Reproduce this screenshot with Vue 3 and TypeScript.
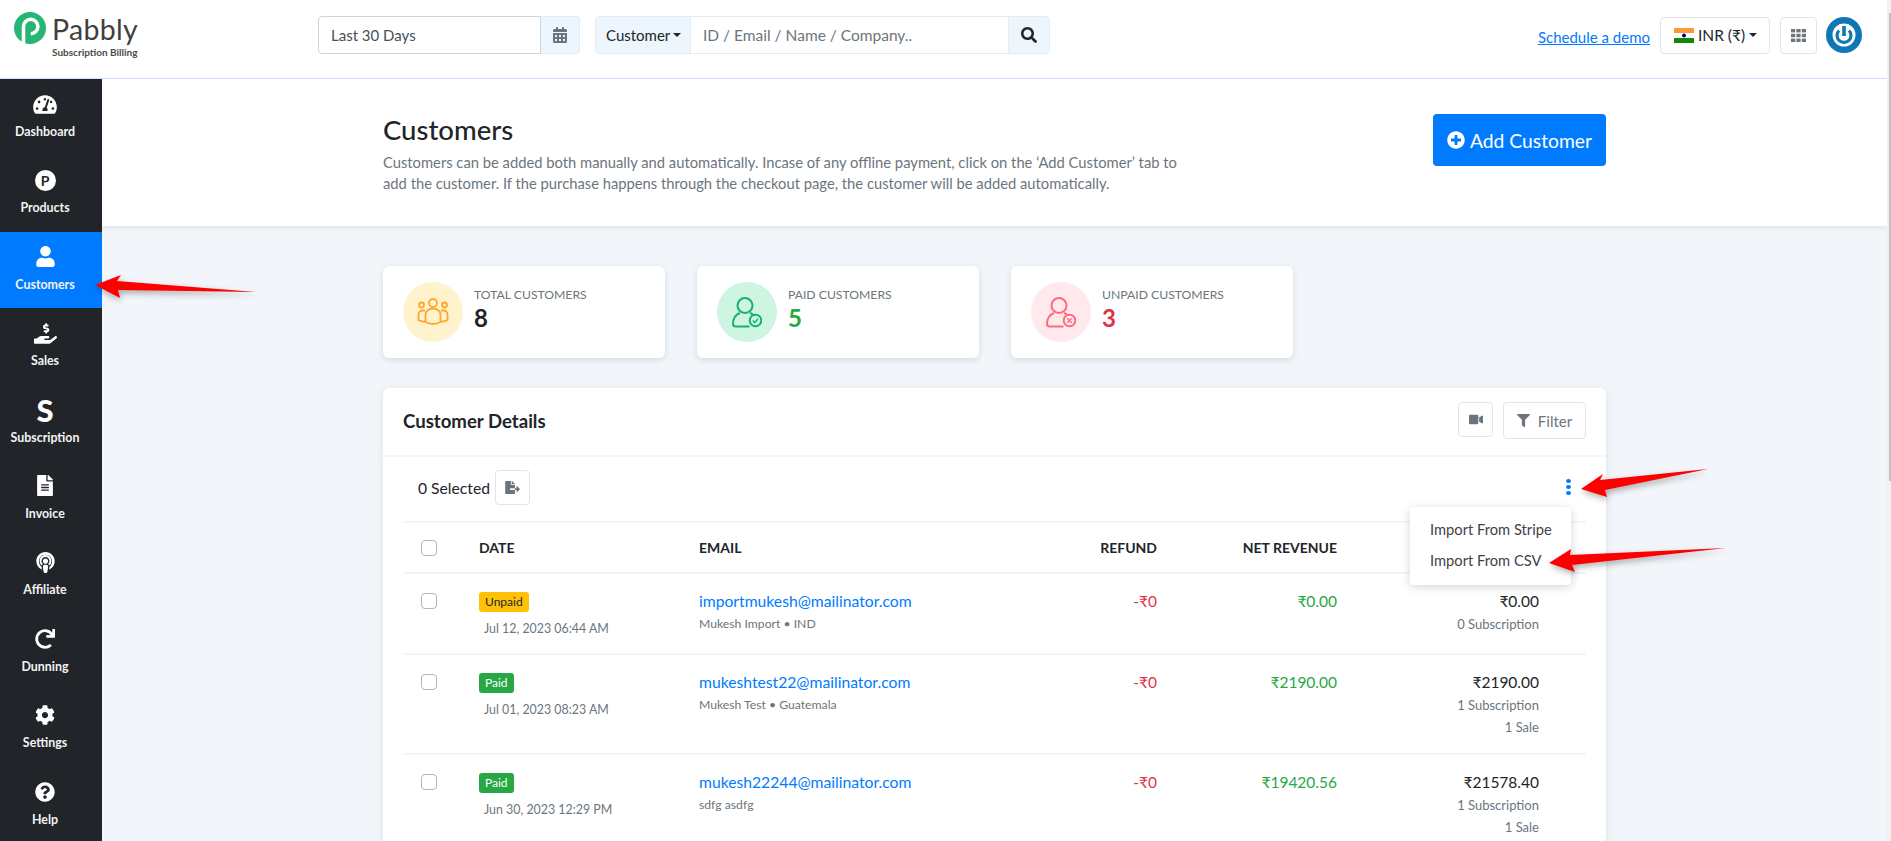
<template>
  <div class="app">
    <header class="topbar">
      <div class="logo">
        <svg class="logo-mark" viewBox="0 0 32 32" width="32" height="32">
          <circle cx="16" cy="16" r="16" fill="#27b574" />
          <path d="M9.5 32V14.5a7.2 7.2 0 1 1 7.2 7.2" fill="none" stroke="#fff" stroke-width="3.6" />
          <circle cx="16.7" cy="14.5" r="3.4" fill="#27b574" />
        </svg>
        <div class="logo-text">
          <div class="logo-name">Pabbly</div>
          <div class="logo-sub">Subscription Billing</div>
        </div>
      </div>

      <div class="date-group">
        <div class="date-input">Last 30 Days</div>
        <div class="addon">
          <svg viewBox="0 0 448 512" width="14" height="16"><path fill="#6c757d" :d="icons.calendar" /></svg>
        </div>
      </div>

      <div class="search-group">
        <div class="search-type">Customer<span class="caret"></span></div>
        <div class="search-input">ID / Email / Name / Company..</div>
        <div class="search-btn">
          <svg viewBox="0 0 512 512" width="16" height="16"><path fill="#212529" :d="icons.search" /></svg>
        </div>
      </div>

      <a class="demo-link">Schedule a demo</a>
      <div class="top-btn inr">
        <svg class="flag" viewBox="0 0 20 15" width="20" height="15">
          <rect width="20" height="5" fill="#ff9933" />
          <rect y="5" width="20" height="5" fill="#fff" />
          <rect y="10" width="20" height="5" fill="#138808" />
          <circle cx="10" cy="7.5" r="2" fill="#000080" />
        </svg>
        <span>INR (₹)</span><span class="caret"></span>
      </div>
      <div class="top-btn grid-btn">
        <svg viewBox="0 0 15 13" width="15" height="13">
          <g fill="#6c757d">
            <rect v-for="c in gridCells" :key="c.x + '-' + c.y" :x="c.x" :y="c.y" width="4.2" height="3.4" />
          </g>
        </svg>
      </div>
      <svg class="avatar" viewBox="0 0 36 36" width="36" height="36">
        <circle cx="18" cy="18" r="18" fill="#0f78b4" />
        <circle cx="18" cy="18" r="11.5" fill="#fff" />
        <path d="M13 13.5a7 7 0 1 0 10 0" fill="none" stroke="#0f78b4" stroke-width="3.2" />
        <rect x="16.2" y="9" width="3.6" height="10" fill="#0f78b4" />
      </svg>
    </header>

    <div class="layout">
      <nav class="sidebar">
        <div v-for="item in nav" :key="item.label" class="nav-item" :class="{ active: item.label === 'Customers' }">
          <div class="nav-icon">
            <span v-if="item.label === 'Products'" class="p-icon">P</span>
            <span v-else-if="item.label === 'Subscription'" class="s-icon">S</span>
            <svg v-else :viewBox="item.box" :width="item.w" :height="item.h"><path fill="#fff" :d="item.d" /></svg>
          </div>
          <div class="nav-label">{{ item.label }}</div>
        </div>
      </nav>

      <main class="main">
        <section class="page-head">
          <div>
            <h1>Customers</h1>
            <p>Customers can be added both manually and automatically. Incase of any offline payment, click on the ‘Add Customer’ tab to<br />add the customer. If the purchase happens through the checkout page, the customer will be added automatically.</p>
          </div>
          <button class="add-btn">
            <svg viewBox="0 0 512 512" width="18" height="18"><path fill="#fff" :d="icons.plus" /></svg>
            Add Customer
          </button>
        </section>

        <section class="content">
          <div class="stats">
            <div class="stat">
              <div class="stat-circle orange">
                <svg viewBox="0 0 32 28" width="32" height="28" fill="none" stroke="#ffa62b" stroke-width="1.8">
                  <circle cx="16" cy="5" r="4" />
                  <circle cx="4.5" cy="7" r="2.5" />
                  <circle cx="27.500" cy="7" r="2.5" />
                  <path d="M8.500 24V16.500a7.500 6 0 0 1 15 0V24q-7.500 4-15 0z" />
                  <path d="M8 12.500H5.500a4 4 0 0 0-4 4V22q2.500 2 7 1.500M24 12.500h2.500a4 4 0 0 1 4 4V22q-2.500 2-7 1.500" />
                </svg>
              </div>
              <div>
                <div class="stat-label">TOTAL CUSTOMERS</div>
                <div class="stat-num">8</div>
              </div>
            </div>
            <div class="stat">
              <div class="stat-circle green">
                <svg viewBox="0 0 30 31" width="30" height="31" fill="none" stroke="#17b26a" stroke-width="2">
                  <circle cx="13" cy="8.500" r="7.500" />
                  <path d="M17.500 29.500H4q-3 0-3-2.500c0-6 3-9.500 7-11M18 16q2 .8 3.500 2" />
                  <circle cx="23.500" cy="23.500" r="5.800" />
                  <path d="M20.800 23.500l2 2.200 3.200-4" stroke-width="1.500" />
                </svg>
              </div>
              <div>
                <div class="stat-label">PAID CUSTOMERS</div>
                <div class="stat-num paid">5</div>
              </div>
            </div>
            <div class="stat">
              <div class="stat-circle red">
                <svg viewBox="0 0 30 31" width="30" height="31" fill="none" stroke="#ff6b7d" stroke-width="2">
                  <circle cx="13" cy="8.500" r="7.500" />
                  <path d="M17.500 29.500H4q-3 0-3-2.500c0-6 3-9.500 7-11M18 16q2 .8 3.500 2" />
                  <circle cx="23.500" cy="23.500" r="5.800" />
                  <path d="M21.300 21.300l4.400 4.400M25.700 21.300l-4.400 4.400" stroke-width="1.500" />
                </svg>
              </div>
              <div>
                <div class="stat-label">UNPAID CUSTOMERS</div>
                <div class="stat-num unpaid">3</div>
              </div>
            </div>
          </div>

          <div class="card">
            <div class="card-head">
              <h2>Customer Details</h2>
              <div class="card-actions">
                <div class="icon-btn video">
                  <svg viewBox="0 0 576 512" width="14" height="13"><path fill="#6c757d" :d="icons.video" /></svg>
                </div>
                <div class="icon-btn filter">
                  <svg viewBox="0 0 512 512" width="13" height="13"><path fill="#6c757d" :d="icons.filter" /></svg>
                  Filter
                </div>
              </div>
            </div>

            <div class="toolbar">
              <div class="selected">
                0 Selected
                <div class="icon-btn export">
                  <svg viewBox="0 0 576 512" width="15" height="13"><path fill="#6c757d" :d="icons.fileExport" /></svg>
                </div>
              </div>
              <div class="kebab"><i></i><i></i><i></i></div>
              <div class="dropdown">
                <div>Import From Stripe</div>
                <div>Import From CSV</div>
              </div>
            </div>

            <div class="table">
              <div class="row head">
                <span class="check"></span>
                <span>DATE</span>
                <span>EMAIL</span>
                <span class="num">REFUND</span>
                <span class="num">NET REVENUE</span>
                <span></span>
              </div>
              <div v-for="row in rows" :key="row.email" class="row">
                <span class="check body-check"></span>
                <div>
                  <span class="badge" :class="row.status.toLowerCase()">{{ row.status }}</span>
                  <div class="date">{{ row.date }}</div>
                </div>
                <div>
                  <div class="email">{{ row.email }}</div>
                  <div class="sub">{{ row.name }}</div>
                </div>
                <div class="num refund">-₹0</div>
                <div class="num net">{{ row.net }}</div>
                <div class="num">
                  <div class="total">{{ row.total }}</div>
                  <div class="sub">{{ row.subs }}</div>
                  <div v-if="row.sale" class="sub sale">{{ row.sale }}</div>
                </div>
              </div>
            </div>
          </div>
        </section>
      </main>
    </div>

    <!-- annotation arrows drawn over the screenshot -->
    <svg class="arrows" width="1887" height="841" viewBox="0 0 1887 841">
      <polygon points="95,285 121,275 117,281 256,292 118,290 120,298" />
      <polygon points="1581,489 1603,474 1600,480 1708,469 1605,490 1607,497" />
      <polygon points="1549,563 1571,549 1570,555 1726,548 1572,565 1575,572" />
    </svg>

    <div class="scrollbar"><div class="thumb"></div></div>
  </div>
</template>

<script setup lang="ts">
const icons = {
  calendar:
    'M0 464c0 26.5 21.5 48 48 48h352c26.5 0 48-21.5 48-48V192H0v272zm320-196c0-6.6 5.4-12 12-12h40c6.6 0 12 5.4 12 12v40c0 6.6-5.4 12-12 12h-40c-6.6 0-12-5.4-12-12v-40zm0 128c0-6.6 5.4-12 12-12h40c6.600 0 12 5.400 12 12v40c0 6.600-5.400 12-12 12h-40c-6.600 0-12-5.400-12-12v-40zM192 268c0-6.600 5.400-12 12-12h40c6.600 0 12 5.400 12 12v40c0 6.600-5.400 12-12 12h-40c-6.600 0-12-5.400-12-12v-40zm0 128c0-6.600 5.400-12 12-12h40c6.600 0 12 5.400 12 12v40c0 6.600-5.400 12-12 12h-40c-6.600 0-12-5.400-12-12v-40zM64 268c0-6.600 5.400-12 12-12h40c6.600 0 12 5.400 12 12v40c0 6.600-5.400 12-12 12H76c-6.600 0-12-5.400-12-12v-40zm0 128c0-6.600 5.400-12 12-12h40c6.600 0 12 5.400 12 12v40c0 6.600-5.400 12-12 12H76c-6.600 0-12-5.400-12-12v-40zM400 64h-48V16c0-8.800-7.200-16-16-16h-32c-8.800 0-16 7.200-16 16v48H160V16c0-8.800-7.200-16-16-16h-32c-8.800 0-16 7.200-16 16v48H48C21.500 64 0 85.500 0 112v48h448v-48c0-26.500-21.500-48-48-48z',
  search:
    'M505 442.700L405.300 343c-4.500-4.500-10.600-7-17-7H372c27.600-35.300 44-79.700 44-128C416 93.100 322.900 0 208 0S0 93.100 0 208s93.100 208 208 208c48.300 0 92.700-16.400 128-44v16.300c0 6.400 2.500 12.500 7 17l99.700 99.700c9.400 9.400 24.600 9.400 33.900 0l28.300-28.300c9.400-9.400 9.400-24.600.1-34zM208 336c-70.700 0-128-57.200-128-128 0-70.700 57.200-128 128-128 70.700 0 128 57.200 128 128 0 70.700-57.200 128-128 128z',
  plus:
    'M256 8C119 8 8 119 8 256s111 248 248 248 248-111 248-248S393 8 256 8zm144 276c0 6.600-5.400 12-12 12h-92v92c0 6.600-5.400 12-12 12h-56c-6.600 0-12-5.400-12-12v-92h-92c-6.600 0-12-5.400-12-12v-56c0-6.600 5.400-12 12-12h92v-92c0-6.600 5.400-12 12-12h56c6.600 0 12 5.400 12 12v92h92c6.600 0 12 5.400 12 12v56z',
  video:
    'M336.200 64H47.800C21.400 64 0 85.400 0 111.800v288.400C0 426.600 21.400 448 47.800 448h288.400c26.400 0 47.800-21.400 47.800-47.800V111.800c0-26.400-21.400-47.800-47.800-47.800zm189.400 37.700L416 177.300v157.400l109.600 75.500c21.200 14.600 50.400-.3 50.400-25.800V127.500c0-25.400-29.100-40.400-50.400-25.800z',
  filter:
    'M487.976 0H24.028C2.710 0-8.047 25.866 7.058 40.971L192 225.941V432c0 7.831 3.821 15.170 10.237 19.662l80 55.980C298.020 518.690 320 507.493 320 487.980V225.941l184.947-184.970C520.021 25.896 509.338 0 487.976 0z',
  fileExport:
    'M384 121.900c0-6.300-2.500-12.400-7-16.900L279.100 7c-4.500-4.500-10.600-7-17-7H256v128h128v-6.100zM192 336v-32c0-8.840 7.160-16 16-16h176V160H248c-13.200 0-24-10.800-24-24V0H24C10.700 0 0 10.700 0 24v464c0 13.300 10.700 24 24 24h336c13.300 0 24-10.700 24-24V352H208c-8.840 0-16-7.160-16-16zm379.050-28.020l-95.700-96.430c-10.060-10.140-27.360-3.010-27.360 11.270V288H384v64h63.990v65.180c0 14.280 17.290 21.410 27.360 11.270l95.700-96.420c6.600-6.660 6.600-17.400 0-24.050z',
}

const gridCells = [0, 1, 2].flatMap((r) => [0, 1, 2].map((c) => ({ x: c * 5.4, y: r * 4.8 })))

const nav = [
  {
    label: 'Dashboard',
    box: '0 0 576 512',
    w: 24,
    h: 21,
    d: 'M288 32C128.940 32 0 160.940 0 320c0 52.800 14.250 102.260 39.060 144.800 5.610 9.620 16.300 15.200 27.440 15.200h443c11.140 0 21.830-5.580 27.440-15.200C561.750 422.260 576 372.800 576 320c0-159.060-128.940-288-288-288zm0 64c14.710 0 26.580 10.130 30.320 23.650-1.110 2.260-2.640 4.230-3.450 6.670l-9.220 27.670c-5.130 3.490-10.970 6.010-17.640 6.010-17.670 0-32-14.330-32-32S270.330 96 288 96zM96 384c-17.670 0-32-14.330-32-32s14.330-32 32-32 32 14.330 32 32-14.330 32-32 32zm48-160c-17.670 0-32-14.330-32-32s14.330-32 32-32 32 14.330 32 32-14.330 32-32 32zm246.770-72.410l-61.330 184C343.130 347.330 352 364.540 352 384c0 11.720-3.380 22.550-8.880 32H232.880c-5.500-9.450-8.880-20.280-8.880-32 0-33.940 26.500-61.430 59.900-63.590l61.340-184.010c4.170-12.560 17.730-19.450 30.360-15.170 12.570 4.190 19.350 17.790 15.170 30.360zm14.660 57.200l15.520-46.550c3.470-1.290 7.130-2.230 11.050-2.230 17.670 0 32 14.330 32 32s-14.330 32-32 32c-11.380-.01-20.890-6.280-26.570-15.220zM480 384c-17.670 0-32-14.330-32-32s14.330-32 32-32 32 14.330 32 32-14.330 32-32 32z',
  },
  { label: 'Products', box: '', w: 0, h: 0, d: '' },
  {
    label: 'Customers',
    box: '0 0 448 512',
    w: 19,
    h: 21,
    d: 'M224 256c70.700 0 128-57.300 128-128S294.700 0 224 0 96 57.300 96 128s57.300 128 128 128zm89.600 32h-16.700c-22.200 10.200-46.900 16-72.900 16s-50.600-5.800-72.900-16h-16.700C60.200 288 0 348.200 0 422.400V464c0 26.500 21.500 48 48 48h352c26.500 0 48-21.500 48-48v-41.600c0-74.200-60.200-134.400-134.400-134.400z',
  },
  {
    label: 'Sales',
    box: '0 0 576 512',
    w: 23,
    h: 21,
    d: 'M271.060 144.300l54.270 14.300a8.590 8.590 0 0 1 6.630 8.100c0 4.600-4.090 8.400-9.120 8.400h-35.600a30 30 0 0 1-11.190-2.200c-5.240-2.200-11.280-1.700-15.300 2l-19 17.500a11.680 11.680 0 0 0-2.250 2.660 11.420 11.420 0 0 0 3.880 15.740 83.770 83.770 0 0 0 34.510 11.500V240c0 8.800 7.830 16 17.370 16h17.370c9.550 0 17.380-7.200 17.380-16v-17.600c32.930-3.600 57.840-31 53.500-63-3.150-23-22.460-41.300-46.560-47.700l-54.270-14.300a8.590 8.590 0 0 1-6.630-8.100c0-4.600 4.090-8.400 9.120-8.400h35.600a30 30 0 0 1 11.230 2.200c5.230 2.200 11.280 1.700 15.300-2l19-17.500a11.310 11.310 0 0 0 2.170-2.600 11.430 11.430 0 0 0-3.840-15.780 83.820 83.820 0 0 0-34.520-11.500V16c0-8.800-7.820-16-17.370-16h-17.370C285.820 0 278 7.200 278 16v17.600c-32.890 3.600-57.850 31-53.510 63 3.140 23 22.510 41.300 46.570 47.700zM565.270 328.100c-11.800-10.700-30.200-10-42.600 0L430.270 402a63.640 63.640 0 0 1-40 14H272a16 16 0 0 1 0-32h78.290c15.900 0 30.710-10.900 33.250-26.600a31.200 31.200 0 0 0 .46-5.460A32 32 0 0 0 352 320H192a117.660 117.660 0 0 0-74.100 26.290L71.400 384H16a16 16 0 0 0-16 16v96a16 16 0 0 0 16 16h356.770a64 64 0 0 0 40-14L564 377a32 32 0 0 0 1.280-48.900z',
  },
  { label: 'Subscription', box: '', w: 0, h: 0, d: '' },
  {
    label: 'Invoice',
    box: '0 0 384 512',
    w: 16,
    h: 21,
    d: 'M224 136V0H24C10.700 0 0 10.700 0 24v464c0 13.300 10.700 24 24 24h336c13.300 0 24-10.700 24-24V160H248c-13.200 0-24-10.800-24-24zm64 236c0 6.600-5.400 12-12 12H108c-6.600 0-12-5.400-12-12v-8c0-6.600 5.400-12 12-12h168c6.600 0 12 5.400 12 12v8zm0-64c0 6.600-5.400 12-12 12H108c-6.600 0-12-5.400-12-12v-8c0-6.600 5.400-12 12-12h168c6.600 0 12 5.400 12 12v8zm0-72v8c0 6.600-5.400 12-12 12H108c-6.600 0-12-5.400-12-12v-8c0-6.600 5.400-12 12-12h168c6.600 0 12 5.400 12 12zm96-114.100v6.100H256V0h6.100c6.400 0 12.500 2.500 17 7l97.900 98c4.500 4.500 7 10.600 7 16.900z',
  },
  {
    label: 'Affiliate',
    box: '0 0 448 512',
    w: 19,
    h: 21,
    d: 'M267.429 488.563C262.286 507.573 242.858 512 224 512c-18.857 0-38.286-4.427-43.428-23.437C172.927 460.134 160 388.898 160 355.750c0-35.156 31.142-43.750 64-43.750s64 8.594 64 43.750c0 32.949-12.871 104.179-20.571 132.813zM156.867 288.554c-18.693-18.308-29.958-44.173-28.784-72.599 2.054-49.724 42.395-89.956 92.124-91.881C274.862 121.958 320 165.807 320 220c0 26.827-11.064 51.116-28.866 68.552-2.675 2.620-2.401 6.986.628 9.187 9.312 6.765 16.460 15.343 21.234 25.363 1.741 3.654 6.497 4.660 9.449 1.891 28.826-27.043 46.553-65.783 45.511-108.565-1.855-76.206-63.595-138.208-139.793-140.369C146.869 73.753 80 139.215 80 220c0 41.361 17.532 78.700 45.550 104.989 2.953 2.771 7.711 1.770 9.453-1.887 4.774-10.021 11.923-18.598 21.235-25.363 3.029-2.200 3.304-6.566.629-9.185zM224 0C100.204 0 0 100.186 0 224c0 89.121 51.888 165.599 127.020 201.819 3.635 1.752 7.871-1.270 7.393-5.280-2.453-20.568-4.470-40.635-5.578-58.109-.139-2.197-1.219-4.228-2.983-5.552C86.072 326.620 64 277.569 64 224c0-88.539 71.654-160 160-160 88.539 0 160 71.654 160 160 0 53.569-22.072 102.620-61.852 132.878-1.764 1.324-2.844 3.355-2.983 5.552-1.108 17.474-3.125 37.541-5.578 58.109-.478 4.010 3.758 7.032 7.393 5.280C396.112 389.599 448 313.121 448 224 448 100.186 347.796 0 224 0zm0 160c-35.346 0-64 28.654-64 64s28.654 64 64 64 64-28.654 64-64-28.654-64-64-64z',
  },
  {
    label: 'Dunning',
    box: '0 0 512 512',
    w: 20,
    h: 20,
    d: 'M500.330 0h-47.410a12 12 0 0 0-12 12.570l4 82.760A247.420 247.420 0 0 0 256 8C119.340 8 7.900 119.530 8 256.190 8.100 393.070 119.100 504 256 504a247.100 247.100 0 0 0 166.180-63.910 12 12 0 0 0 .48-17.430l-34-34a12 12 0 0 0-16.380-.55A176 176 0 1 1 402.100 157.800l-101.530-4.870a12 12 0 0 0-12.570 12v47.410a12 12 0 0 0 12 12h200.330a12 12 0 0 0 12-12V12a12 12 0 0 0-12-12z',
  },
  {
    label: 'Settings',
    box: '0 0 512 512',
    w: 20,
    h: 20,
    d: 'M487.400 315.700l-42.600-24.600c4.300-23.200 4.300-47 0-70.200l42.600-24.600c4.900-2.800 7.100-8.600 5.500-14-11.100-35.600-30-67.800-54.700-94.600-3.800-4.100-10-5.100-14.800-2.300L380.800 110c-17.900-15.400-38.500-27.300-60.800-35.100V25.800c0-5.600-3.900-10.500-9.400-11.700-36.700-8.200-74.300-7.800-109.200 0-5.500 1.200-9.400 6.100-9.400 11.700V75c-22.200 7.900-42.800 19.800-60.800 35.100L88.700 85.500c-4.900-2.800-11-1.900-14.800 2.300-24.700 26.700-43.600 58.900-54.700 94.600-1.700 5.400.6 11.200 5.500 14L67.300 221c-4.300 23.200-4.300 47 0 70.200l-42.600 24.600c-4.900 2.800-7.100 8.600-5.500 14 11.100 35.600 30 67.800 54.700 94.600 3.800 4.100 10 5.100 14.800 2.300l42.600-24.600c17.900 15.400 38.500 27.300 60.800 35.100v49.200c0 5.600 3.900 10.500 9.400 11.700 36.700 8.200 74.300 7.800 109.200 0 5.500-1.200 9.400-6.100 9.400-11.700v-49.200c22.200-7.900 42.800-19.800 60.800-35.100l42.600 24.600c4.900 2.800 11 1.900 14.800-2.300 24.700-26.700 43.600-58.900 54.700-94.600 1.500-5.500-.7-11.300-5.600-14.100zM256 336c-44.100 0-80-35.900-80-80s35.900-80 80-80 80 35.900 80 80-35.900 80-80 80z',
  },
  {
    label: 'Help',
    box: '0 0 512 512',
    w: 20,
    h: 20,
    d: 'M504 256c0 136.997-111.043 248-248 248S8 392.997 8 256C8 119.083 119.043 8 256 8s248 111.083 248 248zM262.655 90c-54.497 0-89.255 22.957-116.549 63.758-3.536 5.286-2.353 12.415 2.715 16.258l34.699 26.310c5.205 3.947 12.621 3.008 16.665-2.122 17.864-22.658 30.113-35.797 57.303-35.797 20.429 0 45.698 13.148 45.698 32.958 0 14.976-12.363 22.667-32.534 33.976C247.128 238.528 216 254.941 216 296v4c0 6.627 5.373 12 12 12h56c6.627 0 12-5.373 12-12v-1.333c0-28.462 83.186-29.647 83.186-106.667 0-58.002-60.165-102-116.531-102zM256 338c-25.365 0-46 20.635-46 46 0 25.364 20.635 46 46 46s46-20.636 46-46c0-25.365-20.635-46-46-46z',
  },
]

const rows = [
  {
    status: 'Unpaid',
    date: 'Jul 12, 2023 06:44 AM',
    email: 'importmukesh@mailinator.com',
    name: 'Mukesh Import • IND',
    net: '₹0.00',
    total: '₹0.00',
    subs: '0 Subscription',
    sale: '',
  },
  {
    status: 'Paid',
    date: 'Jul 01, 2023 08:23 AM',
    email: 'mukeshtest22@mailinator.com',
    name: 'Mukesh Test • Guatemala',
    net: '₹2190.00',
    total: '₹2190.00',
    subs: '1 Subscription',
    sale: '1 Sale',
  },
  {
    status: 'Paid',
    date: 'Jun 30, 2023 12:29 PM',
    email: 'mukesh22244@mailinator.com',
    name: 'sdfg asdfg',
    net: '₹19420.56',
    total: '₹21578.40',
    subs: '1 Subscription',
    sale: '1 Sale',
  },
]
</script>

<style>
html,
body {
  margin: 0;
  overflow: hidden;
}
</style>

<style scoped>
* {
  box-sizing: border-box;
}
.app {
  position: relative;
  height: 100vh;
  overflow: hidden;
  padding-right: 4px;
  font-family: Lato, "Noto Sans", sans-serif;
  font-size: 15px;
  color: #212529;
  background: #f2f6fa;
}
.scrollbar {
  position: absolute;
  top: 0;
  right: 0;
  bottom: 0;
  width: 4px;
  background: #f1f1f1;
}
.thumb {
  width: 2px;
  height: 468px;
  margin: 13px 0 0 2px;
  background: #c1c1c1;
}

.topbar {
  display: flex;
  align-items: center;
  height: 79px;
  padding: 0 25px 8px 14px;
  background: #fff;
  border-bottom: 1px solid #cfe2ff;
}
.logo {
  display: flex;
  width: 304px;
  flex: none;
  gap: 6px;
}
.logo-name {
  font-size: 28.500px;
  font-weight: 400;
  line-height: 34px;
  color: #3f3f3f;
  letter-spacing: 0.3px;
}
.logo-sub {
  font-size: 10px;
  font-weight: 700;
  line-height: 12px;
  color: #4a4a4a;
}
.date-group {
  display: flex;
  width: 262px;
  height: 38px;
  flex: none;
}
.date-input {
  flex: 1;
  display: flex;
  align-items: center;
  padding-left: 12px;
  border: 1px solid #ced4da;
  border-radius: 4px 0 0 4px;
  color: #495057;
}
.addon {
  display: flex;
  align-items: center;
  justify-content: center;
  width: 39px;
  background: #edf5fd;
  border: 1px solid #e3ebf3;
  border-left: 0;
  border-radius: 0 4px 4px 0;
}
.search-group {
  display: flex;
  width: 455px;
  height: 38px;
  margin-left: 15px;
  flex: none;
  border: 1px solid #e3ebf3;
  border-radius: 4px;
}
.search-type {
  display: flex;
  align-items: center;
  width: 95px;
  padding-left: 10px;
  background: #edf5fd;
  border-right: 1px solid #e3ebf3;
}
.search-input {
  flex: 1;
  display: flex;
  align-items: center;
  padding-left: 12px;
  font-size: 15.500px;
  color: #6c757d;
}
.search-btn {
  display: flex;
  align-items: center;
  justify-content: center;
  width: 41px;
  background: #edf5fd;
  border-left: 1px solid #e3ebf3;
}
.caret {
  display: inline-block;
  margin-left: 3px;
  border-top: 4.5px solid #212529;
  border-left: 4.5px solid transparent;
  border-right: 4.5px solid transparent;
}
.demo-link {
  margin-left: auto;
  color: #007bff;
  text-decoration: underline;
  margin-top: 4px;
  font-size: 15px;
}
.top-btn {
  display: flex;
  align-items: center;
  height: 37px;
  border: 1px solid #e1e5ea;
  border-radius: 4px;
  background: #fff;
}
.inr {
  width: 110px;
  margin-left: 10px;
  padding-left: 13px;
  gap: 4px;
  font-size: 15.500px;
}
.inr .caret {
  margin-left: 0;
}
.grid-btn {
  width: 37px;
  margin-left: 10px;
  justify-content: center;
}
.avatar {
  margin-left: 9px;
}

.layout {
  display: flex;
}
.sidebar {
  width: 102px;
  flex: none;
  background: #212529;
}
.nav-item {
  height: 76.400px;
  padding: 12px 12px 0 0;
  text-align: center;
  color: #fff;
}
.nav-item.active {
  background: #007bff;
}
.nav-icon {
  display: flex;
  align-items: center;
  justify-content: center;
  height: 26px;
}
.nav-label {
  margin-top: 6px;
  font-size: 12.400px;
  font-weight: 700;
  line-height: 18px;
  color: #f3f3f3;
}
.p-icon {
  display: flex;
  align-items: center;
  justify-content: center;
  width: 21px;
  height: 21px;
  border-radius: 50%;
  background: #fff;
  color: #212529;
  font-size: 14px;
  font-weight: 700;
}
.s-icon {
  color: #fff;
  font-size: 31px;
  font-weight: 900;
  line-height: 26px;
}

.main {
  flex: 1;
  min-width: 0;
}
.page-head {
  display: flex;
  justify-content: space-between;
  align-items: flex-start;
  height: 147px;
  padding: 35px 281px 0;
  background: #fff;
  box-shadow: 0 2px 6px rgba(0, 0, 0, 0.08);
  position: relative;
}
h1 {
  margin: 0;
  font-size: 27.500px;
  font-weight: 500;
  line-height: 32px;
}
.page-head p {
  margin: 6px 0 0;
  font-size: 14.750px;
  line-height: 21px;
  color: #6c757d;
}
.add-btn {
  display: flex;
  align-items: center;
  gap: 5px;
  justify-content: center;
  width: 173px;
  height: 52px;
  border: 0;
  border-radius: 4px;
  background: #007bff;
  color: #fff;
  font: inherit;
  font-size: 19.300px;
}

.content {
  padding: 40px 281px 0;
}
.stats {
  display: flex;
  gap: 32px;
}
.stat {
  display: flex;
  gap: 11px;
  width: 282px;
  height: 92px;
  padding: 16px 20px;
  background: #fff;
  border-radius: 6px;
  box-shadow: 0 2px 6px rgba(60, 80, 110, 0.16);
}
.stat-circle {
  display: flex;
  align-items: center;
  justify-content: center;
  width: 60px;
  height: 60px;
  flex: none;
  border-radius: 50%;
}
.orange {
  background: #fff3cd;
}
.green {
  background: #cdf5e2;
}
.red {
  background: #ffe9ec;
}
.stat-label {
  margin-top: 3px;
  font-size: 12.200px;
  line-height: 20px;
  color: #6c757d;
}
.stat-num {
  margin-top: 1px;
  font-size: 24px;
  font-weight: 700;
  line-height: 24px;
}
.paid {
  color: #28a745;
}
.unpaid {
  color: #dc3545;
}

.card {
  margin-top: 30px;
  background: #fff;
  border-radius: 6px;
  box-shadow: 0 2px 8px rgba(60, 80, 110, 0.12);
}
.card-head {
  display: flex;
  align-items: center;
  justify-content: space-between;
  height: 69px;
  padding: 0 20px 2px;
  border-bottom: 2px solid #edf5ff;
}
h2 {
  margin: 0;
  font-size: 18.600px;
  font-weight: 700;
}
.card-actions {
  display: flex;
  gap: 10px;
  align-items: flex-start;
}
.icon-btn {
  display: flex;
  align-items: center;
  justify-content: center;
  height: 35px;
  border: 1px solid #e1e5ea;
  border-radius: 4px;
  background: #fff;
  color: #6c757d;
}
.video {
  width: 35px;
}
.filter {
  width: 83px;
  height: 37px;
  gap: 8px;
  font-size: 15px;
}
.toolbar {
  position: relative;
  display: flex;
  align-items: center;
  justify-content: space-between;
  height: 64px;
  padding: 0 0 0 35px;
}
.selected {
  display: flex;
  align-items: center;
  gap: 5px;
  font-size: 15.700px;
  margin-top: -3px;
}
.export {
  width: 35px;
}
.kebab {
  display: flex;
  flex-direction: column;
  gap: 2px;
  margin-right: 35px;
  margin-top: -4px;
}
.kebab i {
  display: block;
  width: 5px;
  height: 4px;
  border-radius: 50%;
  background: #007bff;
}
.dropdown {
  position: absolute;
  top: 50px;
  right: 35px;
  width: 161px;
  height: 78px;
  padding: 7px 0 0 20px;
  background: #fff;
  border-radius: 4px;
  box-shadow: 0 2px 10px rgba(30, 50, 80, 0.2);
  font-size: 14.700px;
  line-height: 31px;
  color: #3f4349;
  z-index: 2;
}
.table {
  margin: 0 20px;
  border-top: 2px solid #edf5ff;
}
.row {
  display: grid;
  grid-template-columns: 58px 220px 300px 158px 180px 202px;
  padding: 17px 47px 0 18px;
  border-bottom: 2px solid #edf5ff;
  min-height: 100px;
}
.row:nth-child(2) {
  min-height: 81px;
}
.row.head {
  align-items: center;
  min-height: 51px;
  padding-top: 0;
  font-size: 14px;
  font-weight: 700;
}
.check {
  display: block;
  width: 16px;
  height: 16px;
  border: 1px solid #adb5bd;
  border-radius: 4px;
  background: #fff;
}
.body-check {
  margin-top: 2px;
}
.num {
  text-align: right;
}
.badge {
  display: inline-block;
  height: 20px;
  padding: 0 6px;
  border-radius: 3px;
  font-size: 12px;
  line-height: 20px;
}
.unpaid.badge {
  background: #ffc107;
  color: #212529;
}
.paid.badge {
  background: #28a745;
  color: #fff;
}
.date {
  margin: 7px 0 0 5px;
  font-size: 12.400px;
  line-height: 20px;
  color: #6c757d;
}
.email {
  font-size: 15.700px;
  line-height: 20px;
  color: #007bff;
}
.sub {
  margin-top: 3px;
  font-size: 12.200px;
  line-height: 20px;
  color: #6c757d;
}
.num .sub {
  font-size: 13px;
}
.sale {
  margin-top: 2px;
}
.refund,
.net,
.total {
  font-size: 15.500px;
  line-height: 20px;
}
.refund {
  color: #dc3545;
}
.net {
  color: #28a745;
}
.arrows {
  position: absolute;
  top: 0;
  left: 0;
  pointer-events: none;
  z-index: 5;
  fill: #f00;
  filter: drop-shadow(1px 3px 3px rgba(0, 0, 0, 0.3));
}
</style>
